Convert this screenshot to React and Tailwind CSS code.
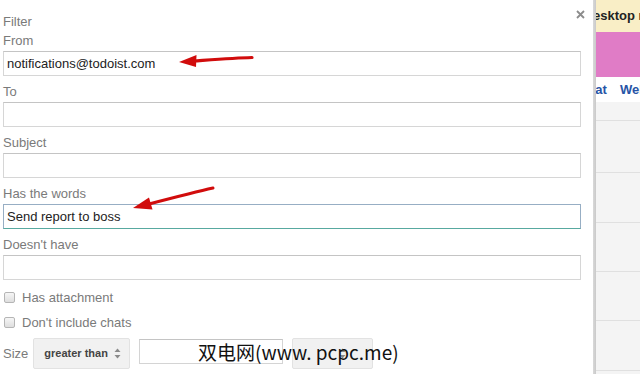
import React from "react";

function Field({ label, value, focused }) {
  return (
    <div className="flex flex-col">
      <div className="pt-[8px] mb-[2px] leading-[16px] text-[13px] text-[#7a7a7a]">{label}</div>
      <div
        className={
          "h-[25px] flex items-center pl-[3px] text-[13px] text-[#222] bg-white border " +
          (focused
            ? "border-[#97aec4] border-b-[#58a9a0]"
            : "border-[#d6d6d6] border-t-[#c4c4c4]")
        }
      >
        {value}
      </div>
    </div>
  );
}

function Check({ label }) {
  return (
    <div className="h-[25px] flex items-center">
      <span className="ml-[1px] w-[11px] h-[11px] rounded-[2px] border border-[#b5b5b5] bg-gradient-to-b from-[#f6f6f6] to-[#dedede]" />
      <span className="ml-[7px] text-[13px] text-[#7a7a7a] leading-[16px]">{label}</span>
    </div>
  );
}

function UpDown() {
  return (
    <svg width="7" height="11" viewBox="0 0 7 11">
      <path d="M3.5 0.5 L6.5 4 L0.5 4 Z" fill="#8a8a8a" />
      <path d="M3.5 10.5 L6.5 7 L0.5 7 Z" fill="#8a8a8a" />
    </svg>
  );
}

export default function App() {
  return (
    <div className="relative w-[640px] h-[374px] overflow-hidden flex bg-white font-['Liberation_Sans',Arial,sans-serif]">
      {/* dialog */}
      <div className="w-[593px] shrink-0 bg-white pl-[3px] pr-[12px] pt-[14px] flex flex-col">
        <div className="flex justify-between items-start">
          <div className="leading-[16px] text-[13px] text-[#7a7a7a]">Filter</div>
          <svg className="mt-[-4px] mr-[-4px]" width="9" height="9" viewBox="0 0 9 9">
            <path d="M1 1 L8 8 M8 1 L1 8" stroke="#8c8c8c" strokeWidth="1.8" />
          </svg>
        </div>
        <div className="mt-[3px] mb-[2px] leading-[16px] text-[13px] text-[#7a7a7a]">From</div>
        <div className="h-[25px] flex items-center pl-[3px] text-[13px] text-[#222] bg-white border border-[#d6d6d6] border-t-[#c4c4c4]">
          notifications@todoist.com
        </div>
        <Field label="To" value="" />
        <Field label="Subject" value="" />
        <Field label="Has the words" value="Send report to boss" focused />
        <Field label="Doesn't have" value="" />
        <div className="mt-[5px]">
          <Check label="Has attachment" />
          <Check label="Don't include chats" />
        </div>
        <div className="mt-[3px] flex items-start">
          <div className="h-[31px] flex items-center text-[13px] text-[#7a7a7a]">Size</div>
          <div className="ml-[5px] w-[97px] h-[31px] flex items-center justify-between pl-[10px] pr-[8px] bg-[#f1f1f1] border border-[#e2e2e2] rounded-[2px]">
            <span className="text-[11px] font-bold text-[#444]">greater than</span>
            <UpDown />
          </div>
          <div className="ml-[9px] mt-[1px] w-[144px] h-[25px] bg-white border border-[#d4d4d4] border-t-[#c4c4c4]" />
          <div className="ml-[9px] w-[81px] h-[31px] flex items-center justify-end pr-[26px] bg-[#f1f1f1] border border-[#e2e2e2] rounded-[2px]">
            <UpDown />
          </div>
        </div>
      </div>
      {/* divider */}
      <div className="w-[3px] shrink-0 bg-gradient-to-r from-[#d9d9d9] to-[#c9c9c9]" />
      {/* background strip */}
      <div className="flex-1 overflow-hidden flex flex-col">
        <div className="h-[32px] bg-[#f9eec6] flex items-center whitespace-nowrap">
          <span className="ml-[-11px] pb-[1px] text-[13px] font-bold text-[#222]">desktop notifications</span>
        </div>
        <div className="h-[45px] bg-[#e07cc6]" />
        <div className="h-[25px] bg-white flex items-center whitespace-nowrap text-[13px] font-bold text-[#2754a6]">
          <span className="ml-[-18px]">Chat</span>
          <span className="ml-[13px]">Web</span>
        </div>
        <div className="flex-1 bg-[#f4f4f4] flex flex-col">
          <div className="h-[19px] border-b border-[#e0e0e0]" />
          <div className="h-[52px] border-b border-[#e0e0e0]" />
          <div className="h-[50px] border-b border-[#e0e0e0]" />
          <div className="h-[49px] border-b border-[#e0e0e0]" />
          <div className="h-[49px] border-b border-[#e0e0e0]" />
          <div className="h-[50px] border-b border-[#e0e0e0]" />
        </div>
      </div>

      {/* red annotation arrows */}
      <svg className="absolute left-0 top-0 pointer-events-none" width="640" height="374" viewBox="0 0 640 374">
        <path d="M252 57.5 C235 58 215 59.5 193 61" stroke="#d10c0c" strokeWidth="3.2" fill="none" strokeLinecap="round" />
        <path d="M179 62 L196.5 55 L196 67 Z" fill="#d10c0c" />
        <path d="M213 188 C195 192 172 198 147 204.5" stroke="#d10c0c" strokeWidth="3" fill="none" strokeLinecap="round" />
        <path d="M133 208 L149 197.5 L152.5 209.5 Z" fill="#d10c0c" />
      </svg>

      {/* watermark */}
      <div className="absolute left-[198px] top-[340px] leading-[24px] text-[19px] text-[#111] whitespace-nowrap font-['Noto_Sans_CJK_SC','Liberation_Sans',sans-serif] pointer-events-none">
        双电网(www. pcpc.me)
      </div>
    </div>
  );
}
